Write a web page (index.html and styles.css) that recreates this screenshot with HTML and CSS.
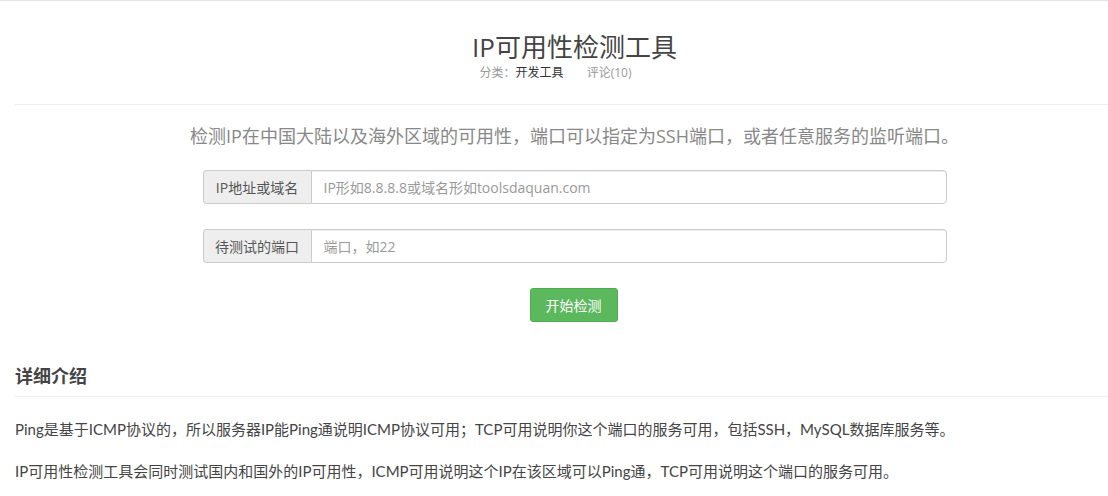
FILE: index.html
```html
<!DOCTYPE html>
<html lang="zh-CN">
<head>
<meta charset="utf-8">
<title>IP可用性检测工具</title>
<link rel="stylesheet" href="styles.css">
</head>
<body>
<div class="topbar"></div>
<main class="container">
  <header class="tool-head">
    <h1 class="tool-title">IP可用性检测工具</h1>
    <div class="tool-meta">
      <span class="meta-item">分类：<a class="meta-link">开发工具</a></span>
      <span class="meta-item">评论(10)</span>
    </div>
  </header>

  <section class="tool-body">
    <p class="tool-desc">检测IP在中国大陆以及海外区域的可用性，端口可以指定为SSH端口，或者任意服务的监听端口。</p>
    <div class="input-group">
      <span class="addon">IP地址或域名</span>
      <input class="field" type="text" placeholder="IP形如8.8.8.8或域名形如toolsdaquan.com">
    </div>
    <div class="input-group">
      <span class="addon">待测试的端口</span>
      <input class="field" type="text" placeholder="端口，如22">
    </div>
    <div class="actions">
      <button class="btn-success" type="button">开始检测</button>
    </div>
  </section>

  <section class="detail">
    <h2 class="detail-title">详细介绍</h2>
    <p class="detail-text">Ping是基于ICMP协议的，所以服务器IP能Ping通说明ICMP协议可用；TCP可用说明你这个端口的服务可用，包括SSH，MySQL数据库服务等。</p>
    <p class="detail-text">IP可用性检测工具会同时测试国内和国外的IP可用性，ICMP可用说明这个IP在该区域可以Ping通，TCP可用说明这个端口的服务可用。</p>
  </section>
</main>
</body>
</html>
```

FILE: styles.css
```css
html, body {
  margin: 0;
  padding: 0;
  overflow: hidden;
  background: #fff;
}

body {
  font-family: "Open Sans", "Noto Sans CJK SC", sans-serif;
  color: #333;
  font-size: 14px;
}

.topbar {
  height: 1px;
  background: #e5e5e5;
}

.container {
  margin-left: 15px;
  width: 1119px;
}

.tool-head {
  text-align: center;
  padding-top: 29px;
  padding-bottom: 22px;
  border-bottom: 1px solid #eee;
}

.tool-title {
  margin: 0;
  font-size: 26px;
  font-weight: normal;
  line-height: 34px;
  color: #444;
}

.tool-meta {
  font-size: 12px;
  line-height: 18px;
  color: #999;
  padding-right: 38px;
}

.meta-item + .meta-item {
  margin-left: 20px;
}

.meta-link {
  color: #333;
}

.tool-body {
  padding-top: 18px;
}

.tool-desc {
  margin: 0 0 21px;
  text-align: center;
  font-size: 18px;
  line-height: 26px;
  color: #888;
}

.input-group {
  display: flex;
  width: 744px;
  height: 34px;
  margin: 0 auto 25px;
  box-sizing: border-box;
}

.addon {
  flex: none;
  width: 108px;
  box-sizing: border-box;
  display: flex;
  align-items: center;
  justify-content: center;
  background: #eee;
  border: 1px solid #ccc;
  border-right: none;
  border-radius: 4px 0 0 4px;
  color: #555;
  font-size: 14px;
}

.field {
  flex: 1;
  min-width: 0;
  box-sizing: border-box;
  height: 34px;
  border: 1px solid #ccc;
  border-radius: 0 4px 4px 0;
  padding: 0 12px;
  font-family: inherit;
  font-size: 14px;
  color: #555;
  box-shadow: inset 0 1px 1px rgba(0,0,0,.075);
  outline: none;
}

.field::placeholder {
  color: #999;
}

.actions {
  display: flex;
  justify-content: center;
}

.btn-success {
  width: 88px;
  height: 34px;
  margin-left: -2px;
  background: #5cb85c;
  border: 1px solid #4cae4c;
  border-radius: 3px;
  color: #fff;
  font-family: inherit;
  font-size: 14px;
  padding: 0;
}

.detail {
  padding-top: 41px;
}

.detail-title {
  margin: 0;
  font-size: 18px;
  line-height: 26px;
  font-weight: bold;
  color: #444;
  padding-bottom: 7px;
  border-bottom: 1px solid #eee;
}

.detail-text {
  margin: 21px 0 0;
  font-family: "Lato", "Noto Sans CJK SC", sans-serif;
  font-size: 15px;
  line-height: 23px;
  color: #444;
}

.detail-text + .detail-text {
  margin-top: 19px;
}
```
